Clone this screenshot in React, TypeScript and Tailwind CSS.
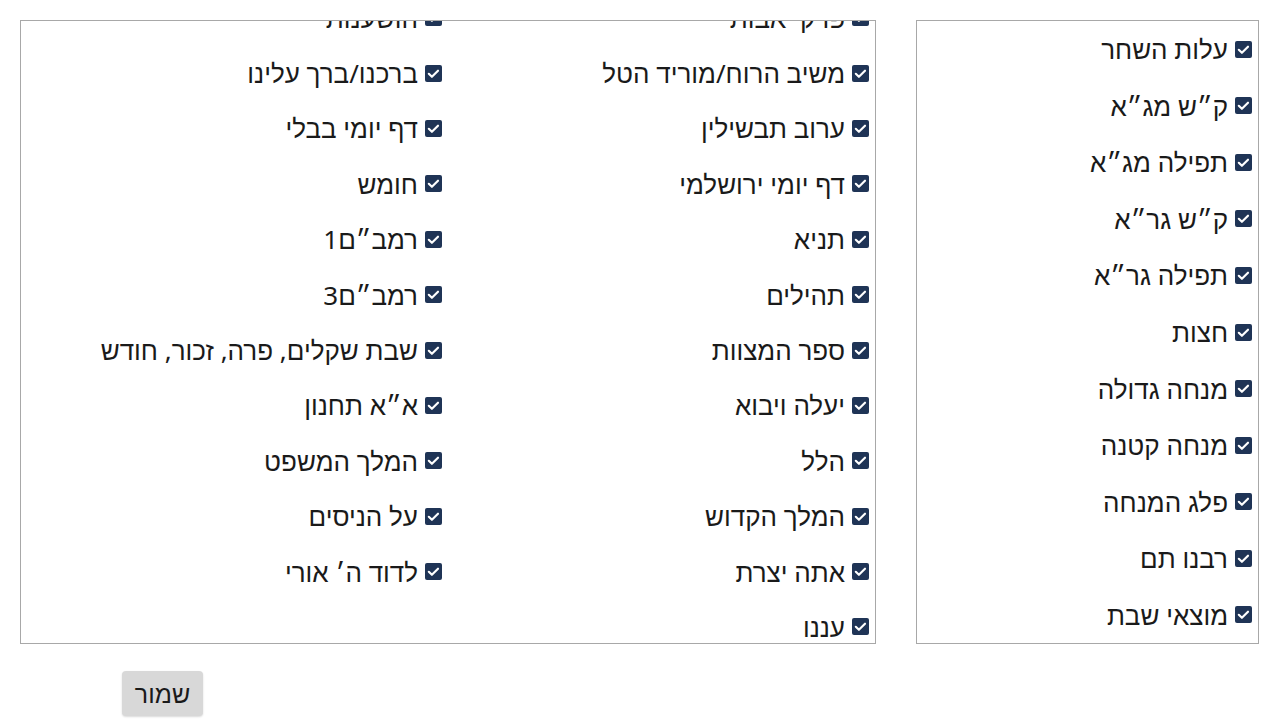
import React from "react";

const sideTimes = [
  "עלות השחר",
  "ק״ש מג״א",
  "תפילה מג״א",
  "ק״ש גר״א",
  "תפילה גר״א",
  "חצות",
  "מנחה גדולה",
  "מנחה קטנה",
  "פלג המנחה",
  "רבנו תם",
  "מוצאי שבת",
];

const mainItems = [
  "פרקי אבות",
  "הושענות",
  "משיב הרוח/מוריד הטל",
  "ברכנו/ברך עלינו",
  "ערוב תבשילין",
  "דף יומי בבלי",
  "דף יומי ירושלמי",
  "חומש",
  "תניא",
  "רמב״ם1",
  "תהילים",
  "רמב״ם3",
  "ספר המצוות",
  "שבת שקלים, פרה, זכור, חודש",
  "יעלה ויבוא",
  "א״א תחנון",
  "הלל",
  "המלך המשפט",
  "המלך הקדוש",
  "על הניסים",
  "אתה יצרת",
  "לדוד ה׳ אורי",
  "עננו",
];

function CheckBox() {
  return (
    <span className="flex h-[17px] w-[17px] shrink-0 items-center justify-center rounded-[2px] bg-[#1f3456]">
      <svg viewBox="0 0 16 16" className="h-[15px] w-[15px]" fill="none" stroke="white" strokeWidth="2.3" strokeLinecap="round" strokeLinejoin="round">
        <polyline points="3,8.3 6.3,11.5 12.8,5" />
      </svg>
    </span>
  );
}

function CheckRow({ label }: { label: string }) {
  return (
    <label className="flex items-center gap-[7px] pr-[6px] text-[26px] leading-none text-[#1a1a1a] whitespace-nowrap">
      <CheckBox />
      <span>{label}</span>
    </label>
  );
}

export default function App() {
  return (
    <div
      dir="rtl"
      className="h-[720px] w-[1280px] overflow-hidden bg-white"
      style={{ fontFamily: '"Noto Sans", "Liberation Sans", "DejaVu Sans", sans-serif' }}
    >
      <div className="flex gap-[40px] pr-[21px] pt-[20px]">
        <div className="flex h-[624px] w-[343px] flex-col border border-[#a8a8a8]">
          {sideTimes.map((t) => (
            <div key={t} className="flex flex-1 items-center">
              <CheckRow label={t} />
            </div>
          ))}
        </div>
        <div className="h-[624px] w-[856px] overflow-hidden border border-[#a8a8a8]">
          <div className="mt-[-31px] grid grid-cols-2 auto-rows-[55.4px]">
            {mainItems.map((t) => (
              <div key={t} className="flex items-center">
                <CheckRow label={t} />
              </div>
            ))}
          </div>
        </div>
      </div>
      <div className="flex justify-end pl-[122px] pt-[27px]">
        <button className="h-[45px] w-[81px] rounded-[4px] bg-[#d8d8d8] text-[25px] text-[#1a1a1a] shadow-[0_1px_2px_rgba(0,0,0,0.15)]">
          שמור
        </button>
      </div>
    </div>
  );
}
